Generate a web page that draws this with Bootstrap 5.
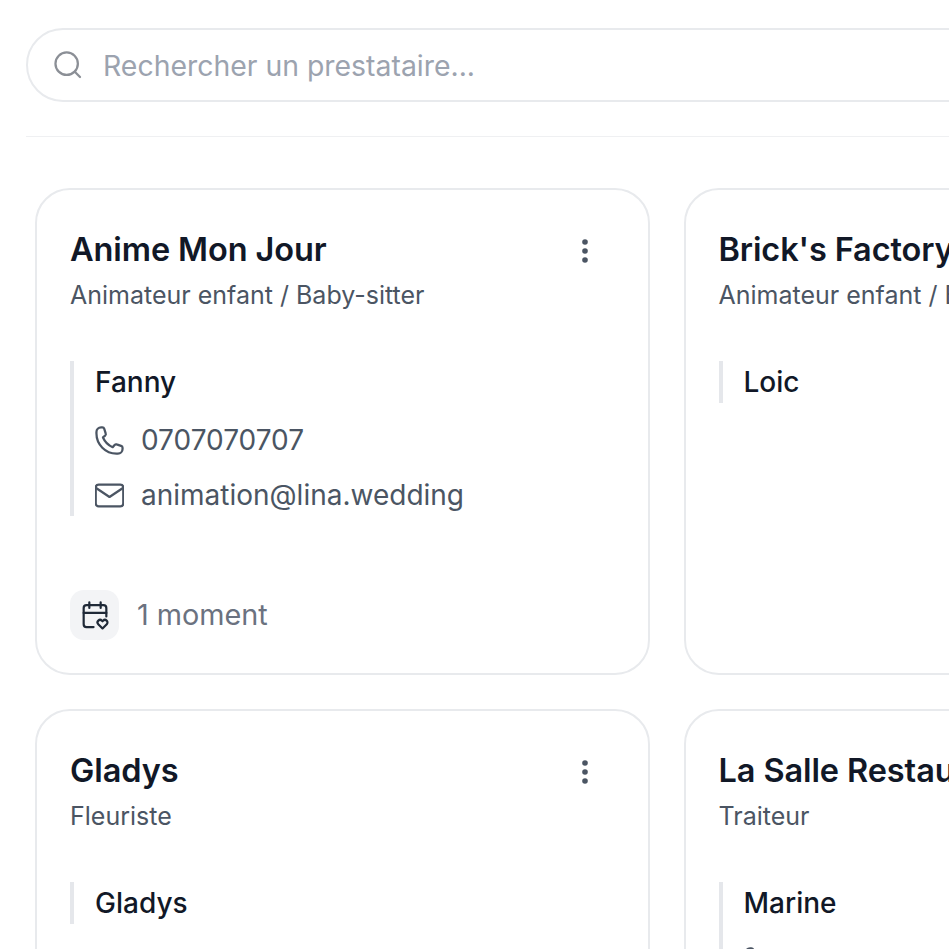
<!DOCTYPE html>
<html lang="fr">
<head>
<meta charset="utf-8">
<title>Prestataires</title>
<link href="https://cdn.jsdelivr.net/npm/bootstrap@5.3.0/dist/css/bootstrap.min.css" rel="stylesheet">
<style>
html,body{height:949px;overflow:hidden;background:#fff}
body{font-family:Inter,"Liberation Sans",sans-serif;color:#111827}
.page-shell{width:1400px;padding:28px 0 0 26px}
.search-pill{height:74px;border:2px solid #e8eaed;border-radius:37px;padding:0 24px;gap:19px;background:#fff}
.search-pill input{border:0;outline:0;flex:1;font-size:28.4px;color:#111827;background:transparent;padding:3px 0 0;font-family:inherit}
.search-pill input::placeholder{color:#9ca3af;opacity:1}
.page-rule{height:0;border-top:1px solid #eff0f2;margin:34px 0 51px}
.vendor-grid{display:grid;grid-template-columns:615px 615px;column-gap:33.5px;row-gap:34px;margin-left:9px}
.vendor-card{height:487px;border:2px solid #e8eaed;border-radius:35px;padding:32px 33px 33px;background:#fff}
.vendor-name{font-size:32.5px;font-weight:600;line-height:55px;height:55px;margin:0;color:#111827;letter-spacing:-.1px;white-space:nowrap}
.vendor-role{font-size:25px;line-height:36px;color:#4b5563;margin:0;white-space:nowrap}
.kebab{width:12px;height:26px;margin:16px 24px 0 0}
.contact-block{border-left:4px solid #e5e7eb;padding-left:21px;margin-top:48px}
.contact-name{font-size:28px;font-weight:500;line-height:42px;color:#111827}
.contact-line{font-size:28px;line-height:41px;min-height:41px;color:#4b5563;gap:17px;margin-top:14px;white-space:nowrap}
.contact-name + .contact-line{margin-top:17px}
.contact-line svg{flex:none}
.moment-row{gap:18px;margin-top:auto;margin-bottom:0}
.moment-icon{width:49px;height:50px;background:#f3f4f6;border-radius:14px}
.moment-text{font-size:28.8px;color:#6b7280}
</style>
</head>
<body>
<div class="page-shell">
  <div class="search-pill d-flex align-items-center">
    <svg width="32" height="32" viewBox="0 0 24 24" fill="none" stroke="#8b8f96" stroke-width="1.7" stroke-linecap="round" stroke-linejoin="round"><circle cx="11" cy="11" r="8.4"/><path d="M21 21l-3.9-3.9"/></svg>
    <input type="text" placeholder="Rechercher un prestataire...">
  </div>
  <div class="page-rule"></div>
  <div class="vendor-grid">
    <div class="vendor-card d-flex flex-column">
      <div class="d-flex justify-content-between">
        <div><h2 class="vendor-name">Anime Mon Jour</h2><p class="vendor-role">Animateur enfant / Baby-sitter</p></div>
        <svg class="kebab" viewBox="0 0 12 26" fill="#4b5563"><circle cx="6" cy="4" r="2.8"/><circle cx="6" cy="13" r="2.8"/><circle cx="6" cy="22" r="2.8"/></svg>
      </div>
      <div class="contact-block">
        <div class="contact-name">Fanny</div>
        <div class="contact-line d-flex align-items-center">
          <svg width="29" height="29" viewBox="2 2 20 20" fill="none" stroke="#4b5563" stroke-width="1.55" stroke-linecap="round" stroke-linejoin="round"><path d="M3 6.2C3 4.4 4.4 3 6.2 3h.9c.6 0 1.1.4 1.3 1l1 3.2c.2.5 0 1-.4 1.400L7.500 9.900c1.300 3 3.700 5.400 6.700 6.700l1.300-1.500c.4-.4.900-.6 1.400-.4l3.100 1c.6.2 1 .7 1 1.300v.8c0 1.800-1.400 3.200-3.200 3.200h-1C9.200 21 3 14.800 3 7.200z"/></svg>
          <span>0707070707</span>
        </div>
        <div class="contact-line d-flex align-items-center">
          <svg width="29" height="29" viewBox="2 2 20 20" fill="none" stroke="#4b5563" stroke-width="1.55" stroke-linecap="round" stroke-linejoin="round"><rect x="2.500" y="4.500" width="19" height="15" rx="2"/><path d="M3 7l9 6 9-6"/></svg>
          <span>animation@lina.wedding</span>
        </div>
      </div>
      <div class="moment-row d-flex align-items-center">
        <div class="moment-icon d-flex align-items-center justify-content-center">
          <svg width="34" height="34" viewBox="0 0 24 24" fill="none" stroke="#1f2937" stroke-width="1.55" stroke-linecap="round" stroke-linejoin="round"><path d="M11 20.500H6a2 2 0 0 1-2-2V7a2 2 0 0 1 2-2h12a2 2 0 0 1 2 2v6"/><path d="M8 3v4M16 3v4M4 10.500h16"/><path d="M17.300 21.500l-3-3a1.800 1.800 0 0 1 2.600-2.500l.4.400.4-.4a1.800 1.800 0 0 1 2.600 2.500z"/></svg>
        </div>
        <span class="moment-text">1 moment</span>
      </div>
    </div>
    <div class="vendor-card d-flex flex-column">
      <div><h2 class="vendor-name">Brick's Factory</h2><p class="vendor-role">Animateur enfant / Baby-sitter</p></div>
      <div class="contact-block"><div class="contact-name">Loic</div></div>
    </div>
    <div class="vendor-card d-flex flex-column">
      <div class="d-flex justify-content-between">
        <div><h2 class="vendor-name">Gladys</h2><p class="vendor-role">Fleuriste</p></div>
        <svg class="kebab" viewBox="0 0 12 26" fill="#4b5563"><circle cx="6" cy="4" r="2.8"/><circle cx="6" cy="13" r="2.8"/><circle cx="6" cy="22" r="2.8"/></svg>
      </div>
      <div class="contact-block"><div class="contact-name">Gladys</div></div>
    </div>
    <div class="vendor-card d-flex flex-column">
      <div><h2 class="vendor-name">La Salle Restaurant</h2><p class="vendor-role">Traiteur</p></div>
      <div class="contact-block">
        <div class="contact-name">Marine</div>
        <div class="contact-line d-flex align-items-center">
          <svg width="29" height="29" viewBox="2 2 20 20" fill="none" stroke="#4b5563" stroke-width="1.55" stroke-linecap="round" stroke-linejoin="round"><path d="M3 6.2C3 4.4 4.4 3 6.2 3h.9c.6 0 1.1.4 1.3 1l1 3.2c.2.5 0 1-.4 1.400L7.500 9.900c1.300 3 3.700 5.400 6.700 6.700l1.300-1.500c.4-.4.900-.6 1.400-.4l3.100 1c.6.2 1 .7 1 1.300v.8c0 1.800-1.400 3.200-3.200 3.200h-1C9.200 21 3 14.800 3 7.200z"/></svg>
        </div>
      </div>
    </div>
  </div>
</div>
<script src="https://cdn.jsdelivr.net/npm/bootstrap@5.3.0/dist/js/bootstrap.bundle.min.js"></script>
</body>
</html>
